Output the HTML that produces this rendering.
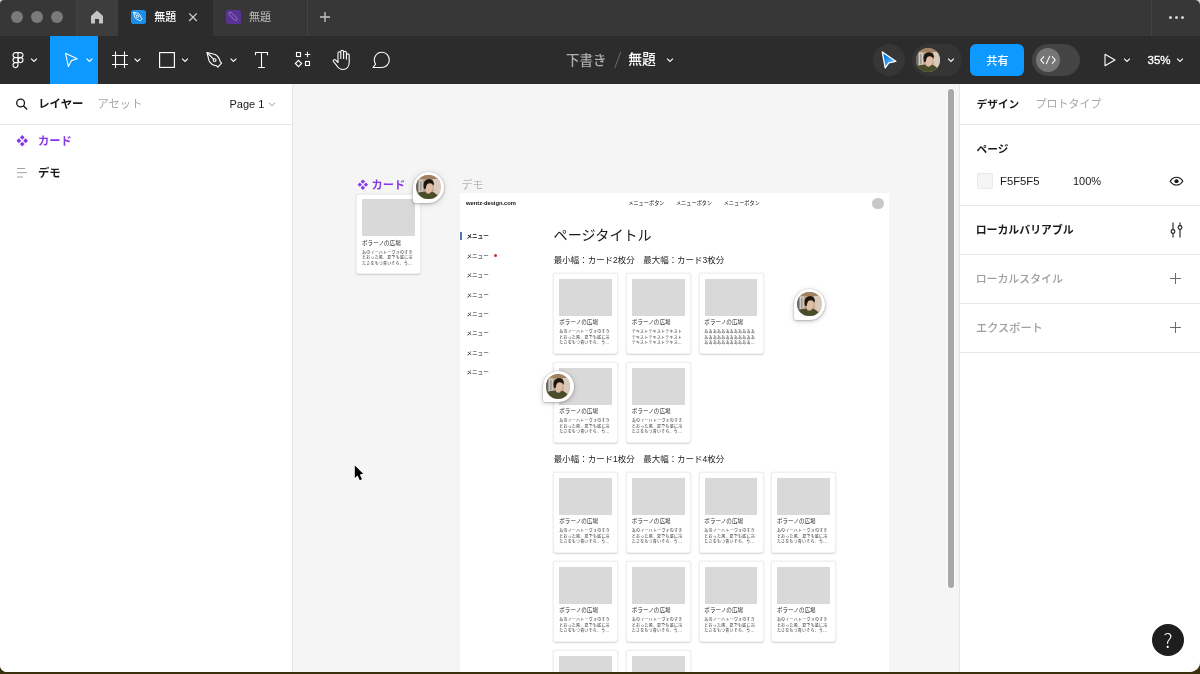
<!DOCTYPE html>
<html lang="ja">
<head>
<meta charset="utf-8">
<title>Figma</title>
<style>
*{box-sizing:border-box;margin:0;padding:0}
html,body{width:1200px;height:674px;overflow:hidden;background:#3a300e}
body{font-family:"Liberation Sans","Noto Sans CJK JP",sans-serif;position:relative;color:#000}
.abs{position:absolute}
#win{will-change:transform;position:absolute;left:0;top:0;width:1200px;height:671.750px;overflow:hidden;border-radius:4px 5px 10px 7px;background:#fff}
/* title bar */
#titlebar{position:absolute;left:0;top:0;width:1200px;height:36px;background:#373737}
.tl{position:absolute;top:11px;width:12px;height:12px;border-radius:50%;background:#7a7a7a}
.tab{position:absolute;top:0;height:36px;font-size:11px;color:#fff;line-height:35.5px;white-space:nowrap}
.tabsep{position:absolute;top:0;width:1px;height:36px;background:#444}
/* toolbar */
#toolbar{position:absolute;left:0;top:36px;width:1200px;height:48px;background:#2c2c2c}
#toolbar svg{position:absolute;overflow:visible}
.chev{position:absolute;width:8px;height:5px;overflow:visible}
/* left */
#left{position:absolute;left:0;top:84px;width:293px;height:588px;background:#fff;border-right:1px solid #e6e6e6}
#right{position:absolute;left:959px;top:84px;width:241px;height:588px;background:#fff;border-left:1px solid #e6e6e6}
#canvas{position:absolute;left:293px;top:84px;width:666px;height:588px;background:#f5f5f5;overflow:hidden}
.t{position:absolute;white-space:nowrap;line-height:1}
.hr{position:absolute;left:0;height:1px;background:#e6e6e6}
/* design frame contents */
.card{position:absolute;width:65px;height:80.500px;background:#fff;border-radius:3px;box-shadow:inset 0 0 0 0.600px #e4e4e4,0 0.800px 1.500px rgba(0,0,0,.16)}
.card .img{position:absolute;left:6px;top:5.800px;width:52.750px;height:36.700px;background:#d9d9d9}
.card .ti{position:absolute;left:5.800px;top:46.200px;font-size:5.600px;line-height:7px;color:#2a2a2a;white-space:nowrap}
.card .bd{position:absolute;left:5.800px;top:56.100px;width:58px;font-size:4px;letter-spacing:0.220px;line-height:5.550px;color:#333;white-space:nowrap}
.menu{position:absolute;left:466px;font-size:6px;line-height:8px;color:#222;white-space:nowrap}
.avatar{position:absolute;width:31px;height:31px;border-radius:50% 50% 50% 2px;background:#fff;box-shadow:0 0 0 0.500px rgba(0,0,0,.1),0 1px 3px rgba(0,0,0,.22),0 1px 7px rgba(0,0,0,.12)}
</style>
</head>
<body>
<div class="abs" style="left:0;top:0;width:8px;height:8px;background:#cfcfcf"></div><div class="abs" style="left:1192px;top:0;width:8px;height:8px;background:#d8d8d8"></div>
<div id="win">

<!-- TITLE BAR -->
<div id="titlebar">
  <div class="tl" style="left:11px"></div>
  <div class="tl" style="left:31px"></div>
  <div class="tl" style="left:51px"></div>
  <div class="abs" style="left:77px;top:0;width:41px;height:36px;background:#3d3d3d"></div>
  <div class="tabsep" style="left:76px"></div>
  <svg class="abs" style="left:90px;top:10px" width="14" height="14" viewBox="0 0 14 14"><path d="M7 0.5 L13 6 V13.5 H9 V9 H5 V13.5 H1 V6 Z" fill="#c4c4c4"/></svg>
  <div class="tab" style="left:118px;width:95px;background:#2c2c2c"></div>
  <div class="abs" style="left:131px;top:9.700px;width:14.500px;height:14px;border-radius:2.500px;background:#1a8ee9"></div>
  <svg class="abs" style="overflow:visible;left:131px;top:9px" width="14.500" height="14" viewBox="0 -0.7 14.5 14" fill="none" stroke="#fff" stroke-width="0.9" stroke-linejoin="round"><path d="M2.600 2.600 L7.200 3.600 Q9.800 5.400 10.200 8.200 L11.200 9.200 L9 11.400 L8 10.400 Q5 9.800 3.600 7.200 Z"/><circle cx="6.600" cy="6.600" r="1.200"/><path d="M2.600 2.600 L5.800 5.800"/></svg>
  <div class="tab" style="left:154.300px;font-weight:500">無題</div>
  <svg class="abs" style="overflow:visible;left:188px;top:12px" width="10" height="10" viewBox="0 -0.2 10 10"><path d="M1.200 1.200 L8.800 8.800 M8.800 1.200 L1.200 8.800" stroke="#d0d0d0" stroke-width="1.2" fill="none"/></svg>
  <div class="abs" style="left:226px;top:9.700px;width:14.500px;height:14px;border-radius:2.500px;background:#5a3494"></div>
  <svg class="abs" style="overflow:visible;left:226px;top:9px" width="14.500" height="14" viewBox="0 -0.7 14.5 14" fill="none" stroke="#9a7cc4" stroke-width="0.9" stroke-linejoin="round"><path d="M3.400 2.800 L5 2.600 L11 8.600 Q11.600 10.400 9.800 10.800 Q9 10.800 8.600 10.400 L3 4.600 Z"/></svg>
  <div class="tab" style="left:249px;color:#bdbdbd">無題</div>
  <div class="tabsep" style="left:307px"></div>
  <svg class="abs" style="left:319px;top:11px" width="12" height="12" viewBox="0 0 12 12"><path d="M6 1 V11 M1 6 H11" stroke="#c8c8c8" stroke-width="1.3" fill="none"/></svg>
  <div class="tabsep" style="left:1151px"></div>
  <div class="abs" style="left:1168.500px;top:15.500px;width:3px;height:3px;border-radius:50%;background:#d0d0d0;box-shadow:6px 0 0 #d0d0d0,12px 0 0 #d0d0d0"></div>
</div>

<!-- TOOLBAR -->
<div id="toolbar">
  <div class="abs" style="left:50px;top:0;width:48px;height:48px;background:#0d99ff"></div>
  <!-- figma logo -->
  <svg style="overflow:visible;left:12px;top:15px" width="12" height="17" viewBox="0 -0.9 12 17" fill="none" stroke="#fff" stroke-width="1.100">
    <path d="M6 0.700 H3.500 a2.500 2.500 0 0 0 0 5 H6 Z M6 0.700 h2.500 a2.500 2.500 0 0 1 0 5 H6 M6 5.700 H3.500 a2.500 2.500 0 0 0 0 5 H6 Z M6 10.700 H3.500 a2.500 2.500 0 1 0 2.500 2.500 Z"/>
    <circle cx="8.500" cy="8.200" r="2.500"/>
  </svg>
  <svg class="chev" style="left:30px;top:21px" viewBox="0 -0.7 8 5"><path d="M1.100 0.900 L4 3.800 L6.900 0.900" stroke="#fff" stroke-width="1.1" fill="none"/></svg>
  <!-- move -->
  <svg style="left:64px;top:16px" width="15" height="16" viewBox="0 0 15 16" fill="none" stroke="#fff" stroke-width="1.1" stroke-linejoin="round"><path d="M1.5 1.2 L13.2 6.8 L7.4 8.6 L4.4 14.6 Z"/></svg>
  <svg class="chev" style="left:85px;top:21px" viewBox="-0.5 -0.7 8 5"><path d="M1.100 0.900 L4 3.800 L6.900 0.900" stroke="#fff" stroke-width="1.1" fill="none"/></svg>
  <!-- frame -->
  <svg style="overflow:visible;left:112px;top:15px" width="16" height="17" viewBox="0 -0.5 16 17" fill="none" stroke="#fff" stroke-width="1.100"><path d="M3.500 0 V16.500 M12.500 0 V16.500 M0 4 H16 M0 13 H16"/></svg>
  <svg class="chev" style="left:133px;top:21px" viewBox="-0.5 -0.7 8 5"><path d="M1.100 0.900 L4 3.800 L6.900 0.900" stroke="#fff" stroke-width="1.1" fill="none"/></svg>
  <!-- rect -->
  <svg style="left:159px;top:16px" width="16" height="16" viewBox="0 0 16 16" fill="none" stroke="#fff" stroke-width="1.15"><rect x="0.6" y="0.6" width="14.8" height="14.8"/></svg>
  <svg class="chev" style="left:181px;top:21px" viewBox="0 -0.7 8 5"><path d="M1.100 0.900 L4 3.800 L6.900 0.900" stroke="#fff" stroke-width="1.1" fill="none"/></svg>
  <!-- pen -->
  <svg style="overflow:visible;left:206px;top:15px" width="17" height="17" viewBox="0 -0.5 17 17" fill="none" stroke="#fff" stroke-width="1.1" stroke-linejoin="round"><path d="M1 1 L9.2 3 Q13.4 5.6 14.2 10.2 L15.6 11.6 L11.8 15.6 L10.4 14.2 Q5.4 13.6 3 9.2 Z"/><path d="M1 1 L7.6 7.6"/><circle cx="8.6" cy="8.6" r="1.4"/></svg>
  <svg class="chev" style="left:229px;top:21px" viewBox="-0.5 -0.7 8 5"><path d="M1.100 0.900 L4 3.800 L6.900 0.900" stroke="#fff" stroke-width="1.1" fill="none"/></svg>
  <!-- text -->
  <svg style="overflow:visible;left:255px;top:15px" width="14" height="17" viewBox="0 -0.5 14 17" fill="none" stroke="#fff" stroke-width="1.100"><path d="M0.500 3.800 V1 H12.500 V3.800 M6.500 1 V16 M3.200 16 H9.800"/></svg>
  <!-- components -->
  <svg style="left:295px;top:16px" width="16" height="16" viewBox="0 0 16 16" fill="none" stroke="#fff" stroke-width="1.100"><rect x="1.500" y="0.500" width="4" height="4"/><path d="M12.500 -0.200 V5.200 M9.800 2.500 H15.200"/><rect x="10.500" y="9.500" width="4" height="4"/><path d="M3.500 8.300 L6.700 11.500 L3.500 14.700 L0.300 11.500 Z"/></svg>
  <!-- hand -->
  <svg style="overflow:visible;left:332px;top:13px" width="20" height="21" viewBox="0 -0.5 20 21" fill="none" stroke="#fff" stroke-width="1.1" stroke-linejoin="round" stroke-linecap="round"><path d="M6 11 V3.6 a1.4 1.4 0 0 1 2.8 0 V9 M8.8 9 V2.2 a1.4 1.4 0 0 1 2.8 0 V9 M11.6 9 V3.2 a1.4 1.4 0 0 1 2.8 0 V9.6 M14.4 9.6 V5.8 a1.4 1.4 0 0 1 2.8 0 V13 c0 4 -2.4 7 -6.2 7 c-3 0 -4.600 -1.400 -6.200 -3.800 L1.400 12 c-0.800 -1.200 0.800 -2.600 2 -1.600 L6 13 V11"/></svg>
  <!-- comment -->
  <svg style="overflow:visible;left:372px;top:15px" width="19" height="17" viewBox="0 -0.5 19 17" fill="none" stroke="#fff" stroke-width="1.1" stroke-linejoin="round"><path d="M10 0.8 a7.6 7.6 0 1 1 -0.600 15.200 H1 L3.600 12.600 A7.600 7.600 0 0 1 10 0.800 Z"/></svg>
  <!-- centre title -->
  <div class="t" style="left:566px;top:17.500px;font-size:13.500px;color:#b0b0b0;font-weight:500;line-height:14px">下書き</div>
  <svg style="left:613px;top:15px" width="10" height="18" viewBox="0 0 10 18"><path d="M1.700 17 L7.800 0.800" stroke="#6a6a6a" stroke-width="1" fill="none"/></svg>
  <div class="t" style="left:628.300px;top:17.200px;font-size:13.800px;color:#fff;font-weight:500;line-height:14px">無題</div>
  <svg class="chev" style="left:666px;top:21px" viewBox="0 -0.7 8 5"><path d="M1.100 0.900 L4 3.800 L6.900 0.900" stroke="#fff" stroke-width="1.1" fill="none"/></svg>
  <!-- right cluster -->
  <div class="abs" style="left:872.500px;top:8px;width:32px;height:32px;border-radius:50%;background:#363636"></div>
  <svg style="left:880px;top:14px" width="18" height="20" viewBox="0 0 18 20"><linearGradient id="cg" x1="0" y1="0" x2="1" y2="1"><stop offset="0.250" stop-color="#0a7be0"/><stop offset="0.800" stop-color="#6cc0ff"/></linearGradient><path d="M2.300 2 L15.800 11.300 L8.800 12.800 L5.200 18 Z" fill="url(#cg)" stroke="#fff" stroke-width="1.300" stroke-linejoin="round"/></svg>
  <div class="abs" style="left:912px;top:8px;width:50px;height:32px;border-radius:16px;background:#353535"></div>
  <svg viewBox="0 0 24 24" width="24.5" height="24.5" style="position:absolute;left:915.8px;top:11.6px;border-radius:50%;overflow:hidden"><filter id="bl0" x="-10%" y="-10%" width="120%" height="120%"><feGaussianBlur stdDeviation="0.600"/></filter><rect width="24" height="24" fill="#b79d85"/><g filter="url(#bl0)"><rect x="-2" y="-2" width="28" height="28" fill="#bda58e"/><path d="M4 -1 H20 V4 H4 Z" fill="#a18262"/><rect x="-1" y="4" width="3.600" height="15" fill="#6d6a64"/><rect x="2.600" y="4.500" width="4.200" height="13" fill="#cfccc6"/><rect x="4.200" y="6" width="1.200" height="10" fill="#8f8c86"/><path d="M16.800 4 H26 V19 H17.500 Z" fill="#d9c9b8"/><path d="M-2 26 V20 Q1.500 16.600 7.500 16.400 H15 Q19.500 17.200 21.500 21 V26 Z" fill="#4a4d2c"/><path d="M9.800 15 H14.400 V17.600 Q12.100 19.300 9.800 17.400 Z" fill="#d8b39b"/><ellipse cx="12.700" cy="12.400" rx="3.700" ry="5" fill="#e2bda6"/><path d="M7.600 12.500 Q6.400 6.600 10.200 4.600 Q13.600 3.200 16.400 5.400 Q18.200 7.200 17.200 10.600 Q15.800 7.800 13 8.200 Q10.800 8.600 10.200 10.600 Q9.800 12.800 9.200 14 Q7.800 14 7.600 12.500 Z" fill="#1d1810"/></g></svg>
  <svg class="chev" style="left:947px;top:21px" viewBox="0 -0.7 8 5"><path d="M1.100 0.900 L4 3.800 L6.900 0.900" stroke="#fff" stroke-width="1.1" fill="none"/></svg>
  <div class="abs" style="left:970px;top:8px;width:54px;height:32px;border-radius:6px;background:#0d99ff"></div>
  <div class="t" style="left:986.300px;top:18.600px;font-size:11.200px;color:#fff;font-weight:500;line-height:12px">共有</div>
  <div class="abs" style="left:1032px;top:8px;width:48px;height:32px;border-radius:16px;background:#444"></div>
  <div class="abs" style="left:1035.700px;top:11.800px;width:24.500px;height:24.500px;border-radius:50%;background:#767676"></div>
  <svg style="overflow:visible;left:1040px;top:19px" width="16" height="9" viewBox="0 -0.5 16 9" fill="none" stroke="#fff" stroke-width="1.1"><path d="M4 0.8 L0.8 4.500 L4 8.200 M12 0.800 L15.200 4.500 L12 8.200 M9.800 0.400 L6.200 8.600"/></svg>
  <svg style="overflow:visible;left:1104px;top:17px" width="12" height="13" viewBox="0 -0.5 12 13" fill="none" stroke="#fff" stroke-width="1.1" stroke-linejoin="round"><path d="M1 0.800 L11 6.500 L1 12.200 Z"/></svg>
  <svg class="chev" style="left:1123px;top:21px" viewBox="0 -0.7 8 5"><path d="M1.100 0.900 L4 3.800 L6.900 0.900" stroke="#fff" stroke-width="1.1" fill="none"/></svg>
  <div class="t" style="left:1147.500px;top:18.200px;font-size:11.500px;color:#fff;-webkit-text-stroke:0.300px #fff;line-height:12px">35%</div>
  <svg class="chev" style="left:1176px;top:21px" viewBox="0 -0.7 8 5"><path d="M1.100 0.900 L4 3.800 L6.900 0.900" stroke="#fff" stroke-width="1.1" fill="none"/></svg>
</div>

<!-- LEFT PANEL -->
<div id="left">
  <svg class="abs" style="overflow:visible;left:15px;top:14px" width="12" height="12" viewBox="-0.8 -0.2 12 12" fill="none" stroke="#1a1a1a" stroke-width="1.350"><circle cx="4.800" cy="4.800" r="3.900"/><path d="M7.600 7.600 L11.300 11.300"/></svg>
  <div class="t" style="left:38.200px;top:14px;font-size:11.400px;font-weight:700;color:#1a1a1a;line-height:12px">レイヤー</div>
  <div class="t" style="left:97.500px;top:14px;font-size:11.300px;color:#a6a6a6;line-height:12px">アセット</div>
  <div class="t" style="left:229.500px;top:14px;font-size:11px;color:#1a1a1a;line-height:12px">Page 1</div>
  <svg class="chev" style="left:268px;top:18px" viewBox="0 0 8 5"><path d="M1.100 0.900 L4 3.800 L6.900 0.900" stroke="#8a8a8a" stroke-width="0.9" fill="none"/></svg>
  <div class="hr" style="top:39.500px;width:292px"></div>
  <!-- layer rows -->
  <svg class="abs" style="overflow:visible;left:16px;top:51px" width="11.500" height="11.500" viewBox="-0.522 0 12 12" fill="#8638e5"><path d="M6 0 L8.500 2.500 L6 5 L3.500 2.500 Z M6 7 L8.500 9.500 L6 12 L3.500 9.500 Z M2.500 3.500 L5 6 L2.500 8.500 L0 6 Z M9.500 3.500 L12 6 L9.500 8.500 L7 6 Z"/></svg>
  <div class="t" style="left:38px;top:51px;font-size:11.300px;font-weight:700;color:#8638e5;line-height:12px">カード</div>
  <svg class="abs" style="left:17px;top:84px" width="11" height="10" viewBox="0 0 11 10" fill="none" stroke="#a0a0a0" stroke-width="1"><path d="M0 0.500 H8 M0 4.700 H10 M0 9 H6"/></svg>
  <div class="t" style="left:38px;top:83px;font-size:11.300px;font-weight:700;color:#1a1a1a;line-height:12px">デモ</div>
</div>

<!-- CANVAS -->
<div id="canvas">
<svg class="abs" style="overflow:visible;left:64px;top:95px" width="10.5" height="10.5" viewBox="-0.686 -0.457 12 12" fill="#8638e5"><path d="M6 0 L8.500 2.500 L6 5 L3.500 2.500 Z M6 7 L8.500 9.500 L6 12 L3.500 9.500 Z M2.500 3.500 L5 6 L2.500 8.500 L0 6 Z M9.500 3.500 L12 6 L9.500 8.500 L7 6 Z"/></svg>
<div class="t" style="left:78.5px;top:95px;font-size:11.2px;font-weight:700;color:#8638e5;line-height:12px">カード</div>
<div class="card" style="left:63.2px;top:109.5px"><div class="img"></div><div class="ti">ポラーノの広場</div><div class="bd">あのイーハトーヴォのすき<br>とおった風、夏でも底に冷<br>たさをもつ青いそら、う...</div></div>
<div class="t" style="left:168.5px;top:95px;font-size:11px;color:#b3b3b3;line-height:12px">デモ</div>
<div class="abs" style="left:167px;top:109px;width:429px;height:500px;background:#fff"></div>
<div class="t" style="left:173px;top:115.80000000000001px;font-size:5.78px;font-weight:700;color:#111;line-height:7px">wentz-design.com</div>
<div class="t" style="left:335.2px;top:116px;font-size:5.2px;color:#222;line-height:7px">メニューボタン</div>
<div class="t" style="left:382.9px;top:116px;font-size:5.2px;color:#222;line-height:7px">メニューボタン</div>
<div class="t" style="left:430.6px;top:116px;font-size:5.2px;color:#222;line-height:7px">メニューボタン</div>
<div class="abs" style="left:579px;top:113.69999999999999px;width:11.6px;height:11.6px;border-radius:50%;background:#c8c8c8"></div>
<div class="abs" style="left:167px;top:147.8px;width:1.5px;height:8.6px;background:#5077b0"></div>
<div class="t" style="left:173.39999999999998px;top:148.4px;font-size:5.6px;font-weight:700;color:#111;line-height:8px">メニュー</div>
<div class="t" style="left:173.39999999999998px;top:167.8px;font-size:5.6px;color:#222;line-height:8px">メニュー</div>
<div class="t" style="left:173.39999999999998px;top:187.1px;font-size:5.6px;color:#222;line-height:8px">メニュー</div>
<div class="t" style="left:173.39999999999998px;top:206.5px;font-size:5.6px;color:#222;line-height:8px">メニュー</div>
<div class="t" style="left:173.39999999999998px;top:225.8px;font-size:5.6px;color:#222;line-height:8px">メニュー</div>
<div class="t" style="left:173.39999999999998px;top:245.2px;font-size:5.6px;color:#222;line-height:8px">メニュー</div>
<div class="t" style="left:173.39999999999998px;top:264.6px;font-size:5.6px;color:#222;line-height:8px">メニュー</div>
<div class="t" style="left:173.39999999999998px;top:283.9px;font-size:5.6px;color:#222;line-height:8px">メニュー</div>
<div class="abs" style="left:201.3px;top:170.3px;width:3px;height:3px;border-radius:50%;background:#cf2a2a"></div>
<div class="t" style="left:260.6px;top:142.8px;font-size:14.1px;color:#1a1a1a;line-height:16px">ページタイトル</div>
<div class="t" style="left:260.79999999999995px;top:170.8px;font-size:8.47px;color:#1a1a1a;line-height:10px">最小幅：カード2枚分<span style="display:inline-block;width:8.5px"></span>最大幅：カード3枚分</div>
<div class="t" style="left:260.79999999999995px;top:370px;font-size:8.47px;color:#1a1a1a;line-height:10px">最小幅：カード1枚分<span style="display:inline-block;width:8.5px"></span>最大幅：カード4枚分</div>
<div class="card" style="left:260.4px;top:189.3px"><div class="img"></div><div class="ti">ポラーノの広場</div><div class="bd">あのイーハトーヴォのすき<br>とおった風、夏でも底に冷<br>たさをもつ青いそら、う...</div></div>
<div class="card" style="left:333.0px;top:189.3px"><div class="img"></div><div class="ti">ポラーノの広場</div><div class="bd">テキストテキストテキスト<br>テキストテキストテキスト<br>テキストテキストテキス...</div></div>
<div class="card" style="left:405.5px;top:189.3px"><div class="img"></div><div class="ti">ポラーノの広場</div><div class="bd">ああああああああああああ<br>ああああああああああああ<br>あああああああああああ...</div></div>
<div class="card" style="left:260.4px;top:278.3px"><div class="img"></div><div class="ti">ポラーノの広場</div><div class="bd">あのイーハトーヴォのすき<br>とおった風、夏でも底に冷<br>たさをもつ青いそら、う...</div></div>
<div class="card" style="left:333.0px;top:278.3px"><div class="img"></div><div class="ti">ポラーノの広場</div><div class="bd">あのイーハトーヴォのすき<br>とおった風、夏でも底に冷<br>たさをもつ青いそら、う...</div></div>
<div class="card" style="left:260.4px;top:388.3px"><div class="img"></div><div class="ti">ポラーノの広場</div><div class="bd">あのイーハトーヴォのすき<br>とおった風、夏でも底に冷<br>たさをもつ青いそら、う...</div></div>
<div class="card" style="left:333.0px;top:388.3px"><div class="img"></div><div class="ti">ポラーノの広場</div><div class="bd">あのイーハトーヴォのすき<br>とおった風、夏でも底に冷<br>たさをもつ青いそら、う...</div></div>
<div class="card" style="left:405.5px;top:388.3px"><div class="img"></div><div class="ti">ポラーノの広場</div><div class="bd">あのイーハトーヴォのすき<br>とおった風、夏でも底に冷<br>たさをもつ青いそら、う...</div></div>
<div class="card" style="left:478.1px;top:388.3px"><div class="img"></div><div class="ti">ポラーノの広場</div><div class="bd">あのイーハトーヴォのすき<br>とおった風、夏でも底に冷<br>たさをもつ青いそら、う...</div></div>
<div class="card" style="left:260.4px;top:477.3px"><div class="img"></div><div class="ti">ポラーノの広場</div><div class="bd">あのイーハトーヴォのすき<br>とおった風、夏でも底に冷<br>たさをもつ青いそら、う...</div></div>
<div class="card" style="left:333.0px;top:477.3px"><div class="img"></div><div class="ti">ポラーノの広場</div><div class="bd">あのイーハトーヴォのすき<br>とおった風、夏でも底に冷<br>たさをもつ青いそら、う...</div></div>
<div class="card" style="left:405.5px;top:477.3px"><div class="img"></div><div class="ti">ポラーノの広場</div><div class="bd">あのイーハトーヴォのすき<br>とおった風、夏でも底に冷<br>たさをもつ青いそら、う...</div></div>
<div class="card" style="left:478.1px;top:477.3px"><div class="img"></div><div class="ti">ポラーノの広場</div><div class="bd">あのイーハトーヴォのすき<br>とおった風、夏でも底に冷<br>たさをもつ青いそら、う...</div></div>
<div class="card" style="left:260.4px;top:566.3px"><div class="img"></div><div class="ti">ポラーノの広場</div><div class="bd">あのイーハトーヴォのすき<br>とおった風、夏でも底に冷<br>たさをもつ青いそら、う...</div></div>
<div class="card" style="left:333.0px;top:566.3px"><div class="img"></div><div class="ti">ポラーノの広場</div><div class="bd">あのイーハトーヴォのすき<br>とおった風、夏でも底に冷<br>たさをもつ青いそら、う...</div></div>
<div class="avatar" style="left:120.2px;top:87.8px"><svg viewBox="0 0 24 24" width="24.4" height="24.4" style="position:absolute;left:3.3px;top:3.3px;border-radius:50%;overflow:hidden"><filter id="bl1" x="-10%" y="-10%" width="120%" height="120%"><feGaussianBlur stdDeviation="0.600"/></filter><rect width="24" height="24" fill="#b79d85"/><g filter="url(#bl1)"><rect x="-2" y="-2" width="28" height="28" fill="#bda58e"/><path d="M4 -1 H20 V4 H4 Z" fill="#a18262"/><rect x="-1" y="4" width="3.600" height="15" fill="#6d6a64"/><rect x="2.600" y="4.500" width="4.200" height="13" fill="#cfccc6"/><rect x="4.200" y="6" width="1.200" height="10" fill="#8f8c86"/><path d="M16.800 4 H26 V19 H17.500 Z" fill="#d9c9b8"/><path d="M-2 26 V20 Q1.500 16.600 7.500 16.400 H15 Q19.500 17.200 21.500 21 V26 Z" fill="#4a4d2c"/><path d="M9.800 15 H14.400 V17.600 Q12.100 19.300 9.800 17.400 Z" fill="#d8b39b"/><ellipse cx="12.700" cy="12.400" rx="3.700" ry="5" fill="#e2bda6"/><path d="M7.600 12.500 Q6.400 6.600 10.200 4.600 Q13.600 3.200 16.400 5.400 Q18.200 7.200 17.200 10.600 Q15.800 7.800 13 8.200 Q10.800 8.600 10.200 10.600 Q9.800 12.800 9.200 14 Q7.800 14 7.600 12.500 Z" fill="#1d1810"/></g></svg></div>
<div class="avatar" style="left:500.9px;top:204.7px"><svg viewBox="0 0 24 24" width="24.4" height="24.4" style="position:absolute;left:3.3px;top:3.3px;border-radius:50%;overflow:hidden"><filter id="bl2" x="-10%" y="-10%" width="120%" height="120%"><feGaussianBlur stdDeviation="0.600"/></filter><rect width="24" height="24" fill="#b79d85"/><g filter="url(#bl2)"><rect x="-2" y="-2" width="28" height="28" fill="#bda58e"/><path d="M4 -1 H20 V4 H4 Z" fill="#a18262"/><rect x="-1" y="4" width="3.600" height="15" fill="#6d6a64"/><rect x="2.600" y="4.500" width="4.200" height="13" fill="#cfccc6"/><rect x="4.200" y="6" width="1.200" height="10" fill="#8f8c86"/><path d="M16.800 4 H26 V19 H17.500 Z" fill="#d9c9b8"/><path d="M-2 26 V20 Q1.500 16.600 7.500 16.400 H15 Q19.500 17.200 21.500 21 V26 Z" fill="#4a4d2c"/><path d="M9.800 15 H14.400 V17.600 Q12.100 19.300 9.800 17.400 Z" fill="#d8b39b"/><ellipse cx="12.700" cy="12.400" rx="3.700" ry="5" fill="#e2bda6"/><path d="M7.600 12.500 Q6.400 6.600 10.200 4.600 Q13.600 3.200 16.400 5.400 Q18.200 7.200 17.200 10.600 Q15.800 7.800 13 8.200 Q10.800 8.600 10.200 10.600 Q9.800 12.800 9.200 14 Q7.800 14 7.600 12.500 Z" fill="#1d1810"/></g></svg></div>
<div class="avatar" style="left:249.7px;top:287.1px"><svg viewBox="0 0 24 24" width="24.4" height="24.4" style="position:absolute;left:3.3px;top:3.3px;border-radius:50%;overflow:hidden"><filter id="bl3" x="-10%" y="-10%" width="120%" height="120%"><feGaussianBlur stdDeviation="0.600"/></filter><rect width="24" height="24" fill="#b79d85"/><g filter="url(#bl3)"><rect x="-2" y="-2" width="28" height="28" fill="#bda58e"/><path d="M4 -1 H20 V4 H4 Z" fill="#a18262"/><rect x="-1" y="4" width="3.600" height="15" fill="#6d6a64"/><rect x="2.600" y="4.500" width="4.200" height="13" fill="#cfccc6"/><rect x="4.200" y="6" width="1.200" height="10" fill="#8f8c86"/><path d="M16.800 4 H26 V19 H17.500 Z" fill="#d9c9b8"/><path d="M-2 26 V20 Q1.500 16.600 7.500 16.400 H15 Q19.500 17.200 21.500 21 V26 Z" fill="#4a4d2c"/><path d="M9.800 15 H14.400 V17.600 Q12.100 19.300 9.800 17.400 Z" fill="#d8b39b"/><ellipse cx="12.700" cy="12.400" rx="3.700" ry="5" fill="#e2bda6"/><path d="M7.600 12.500 Q6.400 6.600 10.200 4.600 Q13.600 3.200 16.400 5.400 Q18.200 7.200 17.200 10.600 Q15.800 7.800 13 8.200 Q10.800 8.600 10.200 10.600 Q9.800 12.800 9.200 14 Q7.800 14 7.600 12.500 Z" fill="#1d1810"/></g></svg></div>
<div class="abs" style="left:655px;top:5px;width:6px;height:499px;border-radius:3px;background:#a8a8a8;box-shadow:0 0 0 1px rgba(255,255,255,.7)"></div>
<svg class="abs" style="left:60px;top:379px;overflow:visible" width="13" height="19" viewBox="0 -0.5 13 19"><path d="M1.800 2.100 V14.400 L4.600 11.900 L6.800 16.700 L8.900 15.800 L6.800 11 L10.200 10.300 Z" fill="#000" stroke="#fff" stroke-width="1.300" stroke-linejoin="round" paint-order="stroke"/></svg>
</div>

<!-- RIGHT PANEL -->
<div id="right">
  <div class="t" style="left:16.500px;top:14px;font-size:10.700px;font-weight:700;color:#1a1a1a;line-height:12px">デザイン</div>
  <div class="t" style="left:75.500px;top:14px;font-size:11px;color:#a6a6a6;line-height:12px">プロトタイプ</div>
  <div class="hr" style="top:39.500px;width:240px"></div>
  <div class="t" style="left:16.500px;top:58.500px;font-size:10.700px;font-weight:700;color:#1a1a1a;line-height:12px">ページ</div>
  <div class="abs" style="left:17px;top:89px;width:16px;height:16px;background:#f5f5f5;border:1px solid #e9e9e9;border-radius:1px"></div>
  <div class="t" style="left:40px;top:91.200px;font-size:11.300px;color:#1a1a1a;line-height:12px">F5F5F5</div>
  <div class="t" style="left:113px;top:91.300px;font-size:11px;color:#1a1a1a;line-height:12px">100%</div>
  <svg class="abs" style="overflow:visible;left:209px;top:92px" width="14" height="9" viewBox="-0.5 -0.778 14 10" preserveAspectRatio="none" fill="none" stroke="#1a1a1a" stroke-width="1.2"><path d="M0.700 5 C2.500 1.800 4.700 0.700 7 0.700 S11.500 1.800 13.300 5 C11.500 8.200 9.300 9.300 7 9.300 S2.500 8.200 0.700 5 Z"/><circle cx="7" cy="5" r="2.100" fill="#1a1a1a" stroke="none"/></svg>
  <div class="hr" style="top:121px;width:240px"></div>
  <div class="t" style="left:15.700px;top:140px;font-size:10.900px;font-weight:700;color:#1a1a1a;line-height:12px">ローカルバリアブル</div>
  <svg class="abs" style="overflow:visible;left:209px;top:138px" width="14" height="16" viewBox="-0.5 0 14 16" fill="none" stroke="#1a1a1a" stroke-width="1.100"><path d="M3.500 0.500 V7.600 M3.500 11.400 V15.500 M10.500 0.500 V3.600 M10.500 7.400 V15.500"/><circle cx="3.500" cy="9.500" r="1.900"/><circle cx="10.500" cy="5.500" r="1.900"/></svg>
  <div class="hr" style="top:170px;width:240px"></div>
  <div class="t" style="left:15.700px;top:189px;font-size:10.900px;font-weight:500;color:#a0a0a0;line-height:12px">ローカルスタイル</div>
  <svg class="abs" style="left:210px;top:189px" width="11" height="11" viewBox="0 0 11 11"><path d="M5.500 0 V11 M0 5.500 H11" stroke="#6b6b6b" stroke-width="1" fill="none"/></svg>
  <div class="hr" style="top:219px;width:240px"></div>
  <div class="t" style="left:16px;top:238px;font-size:11.200px;font-weight:500;color:#a0a0a0;line-height:12px">エクスポート</div>
  <svg class="abs" style="left:210px;top:238px" width="11" height="11" viewBox="0 0 11 11"><path d="M5.500 0 V11 M0 5.500 H11" stroke="#6b6b6b" stroke-width="1" fill="none"/></svg>
  <div class="hr" style="top:268px;width:240px"></div>
  <div class="abs" style="left:192px;top:540px;width:32px;height:32px;border-radius:50%;background:#1e1e1e"></div>
  <div class="t" style="left:192px;top:545.500px;width:32px;text-align:center;font-family:'Noto Sans CJK JP',sans-serif;font-weight:300;font-size:20px;color:#fff;line-height:20px">?</div>
</div>

</div>
</body>
</html>
